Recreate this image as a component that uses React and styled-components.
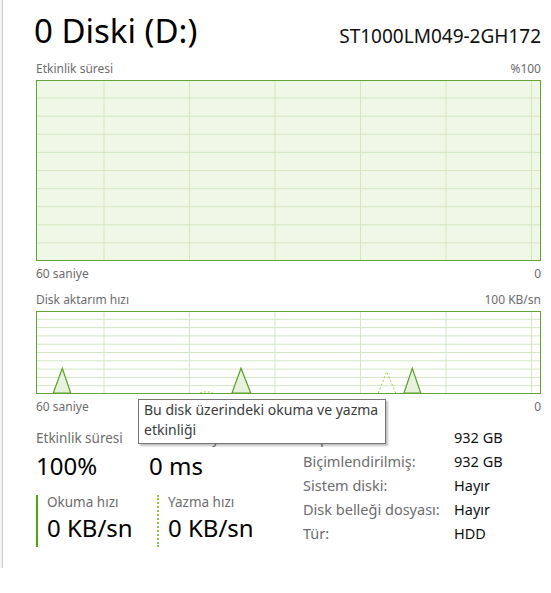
import styled, { createGlobalStyle } from "styled-components";

const GlobalStyle = createGlobalStyle`
  html, body {
    margin: 0;
    padding: 0;
    background: #ffffff;
  }
  body {
    font-family: "Segoe UI", "Noto Sans", sans-serif;
    color: #000;
  }
`;

const Page = styled.div`
  display: flex;
  width: 551px;
  height: 593px;
  overflow: hidden;
`;

const Strip = styled.div`
  width: 2px;
  height: 568px;
  background: #f2f2f2;
  border-right: 1px solid #cdcdcd;
  flex: none;
`;

const Main = styled.div`
  position: relative;
  flex: 1;
  padding: 11px 10px 0 33px;
`;

const Header = styled.div`
  display: flex;
  justify-content: space-between;
  align-items: baseline;
  height: 48px;
`;

const Title = styled.h1`
  margin: 0 0 0 -2px;
  font-size: 33px;
  font-weight: 400;
  line-height: 40px;
`;

const Model = styled.div`
  font-size: 19px;
  line-height: 24px;
  color: #111;
`;

const AxisRow = styled.div`
  display: flex;
  justify-content: space-between;
  font-size: 12px;
  line-height: 16px;
  color: #6d6d6d;
  height: ${(p) => p.$h || 20}px;
  align-items: ${(p) => (p.$top ? "flex-start" : "flex-end")};
  padding: ${(p) => (p.$top ? "5px 0 0" : "0 0 3px")};
  box-sizing: border-box;
`;

const ChartBox = styled.svg`
  display: block;
`;

const Stats = styled.div`
  display: grid;
  grid-template-columns: 267px 1fr;
  margin-top: 14px;
`;

const LeftStats = styled.div`
  display: grid;
  grid-template-columns: 113px 1fr;
  row-gap: 13px;
`;

const Stat = styled.div`
  display: flex;
  flex-direction: column;
  margin-left: ${(p) => (p.$bar === "dotted" ? 8 : 0)}px;
  padding-left: ${(p) => (p.$bar ? 9 : 0)}px;
  border-left: ${(p) =>
    p.$bar === "solid"
      ? "2px solid #4da60c"
      : p.$bar === "dotted"
      ? "2px dotted #8cc63f"
      : "none"};
  height: ${(p) => (p.$bar ? "52px" : "auto")};
`;

const StatLabel = styled.div`
  font-size: 13.5px;
  line-height: ${(p) => (p.$tight ? 14 : 18)}px;
  color: #6d6d6d;
  white-space: nowrap;
`;

const StatValue = styled.div`
  margin-top: 3px;
  font-size: 24px;
  line-height: 32px;
  color: #000;
  white-space: nowrap;
`;

const InfoTable = styled.div`
  display: grid;
  grid-template-columns: 151px 1fr;
  grid-auto-rows: 24px;
  font-size: 14.5px;
  line-height: 24px;
  margin-top: -4px;
`;

const InfoKey = styled.div`
  color: #6d6d6d;
  white-space: nowrap;
`;

const InfoVal = styled.div`
  color: #111;
`;

const Tooltip = styled.div`
  position: absolute;
  left: 135px;
  top: 399px;
  width: 240px;
  padding: 0 1px 3px 5px;
  background: #fff;
  border: 1px solid #767676;
  box-shadow: 2px 2px 2px rgba(0, 0, 0, 0.25);
  font-size: 14px;
  line-height: 20px;
  color: #3c3c3c;
`;

const W = 505;
const vLines = [68, 153.5, 239, 324.5, 410, 495.5];

function Chart({ height, fill, children }) {
  const hLines = Array.from({ length: 9 }, (_, i) => ((i + 1) * height) / 10);
  return (
    <ChartBox width={W} height={height} viewBox={`0 0 ${W} ${height}`}>
      <rect x="0" y="0" width={W} height={height} fill={fill} />
      {hLines.map((y) => (
        <line key={"h" + y} x1="1" x2={W - 1} y1={y} y2={y} stroke="#d3e7c3" strokeWidth="1" />
      ))}
      {vLines.map((x) => (
        <line key={"v" + x} x1={x} x2={x} y1="1" y2={height - 1} stroke="#d3e7c3" strokeWidth="1" />
      ))}
      {children}
      <rect x="0.5" y="0.5" width={W - 1} height={height - 1} fill="none" stroke="#64a335" strokeWidth="1" />
    </ChartBox>
  );
}

function Spike({ x1, x2, peak, top, base, dashed }) {
  const d = `M${x1} ${base} L${peak} ${top} L${x2} ${base}`;
  return dashed ? (
    <path d={d} fill="none" stroke="#9ccc5c" strokeWidth="1" strokeDasharray="2 2" />
  ) : (
    <path d={d + " Z"} fill="#e6f2dc" stroke="#5d9e2b" strokeWidth="1.2" />
  );
}

export default function App() {
  const h2 = 83;
  return (
    <>
      <GlobalStyle />
      <Page>
        <Strip />
        <Main>
          <Header>
            <Title>0 Diski (D:)</Title>
            <Model>ST1000LM049-2GH172</Model>
          </Header>

          <AxisRow $h={21}>
            <span>Etkinlik süresi</span>
            <span>%100</span>
          </AxisRow>
          <Chart height={181} fill="#eff7e6" />
          <AxisRow $h={21} $top>
            <span>60 saniye</span>
            <span>0</span>
          </AxisRow>

          <AxisRow $h={29}>
            <span>Disk aktarım hızı</span>
            <span>100 KB/sn</span>
          </AxisRow>
          <Chart height={h2} fill="#ffffff">
            <Spike x1={164} x2={177} peak={170.7} top={80.5} base={h2 - 1} dashed />
            <Spike x1={342.3} x2={359.7} peak={350.7} top={60.7} base={h2 - 1} dashed />
            <Spike x1={17.3} x2={34.7} peak={26.3} top={57.3} base={h2 - 1} />
            <Spike x1={196} x2={214.7} peak={205} top={57.3} base={h2 - 1} />
            <Spike x1={368} x2={384.7} peak={376.3} top={57.3} base={h2 - 1} />
          </Chart>
          <AxisRow $h={21} $top>
            <span>60 saniye</span>
            <span>0</span>
          </AxisRow>

          <Stats>
            <LeftStats>
              <Stat>
                <StatLabel>Etkinlik süresi</StatLabel>
                <StatValue>100%</StatValue>
              </Stat>
              <Stat>
                <StatLabel>Ortalama yanıt süresi</StatLabel>
                <StatValue>0 ms</StatValue>
              </Stat>
              <Stat $bar="solid">
                <StatLabel $tight>Okuma hızı</StatLabel>
                <StatValue>0 KB/sn</StatValue>
              </Stat>
              <Stat $bar="dotted">
                <StatLabel $tight>Yazma hızı</StatLabel>
                <StatValue>0 KB/sn</StatValue>
              </Stat>
            </LeftStats>
            <InfoTable>
              <InfoKey>Kapasite:</InfoKey>
              <InfoVal>932 GB</InfoVal>
              <InfoKey>Biçimlendirilmiş:</InfoKey>
              <InfoVal>932 GB</InfoVal>
              <InfoKey>Sistem diski:</InfoKey>
              <InfoVal>Hayır</InfoVal>
              <InfoKey>Disk belleği dosyası:</InfoKey>
              <InfoVal>Hayır</InfoVal>
              <InfoKey>Tür:</InfoKey>
              <InfoVal>HDD</InfoVal>
            </InfoTable>
          </Stats>

          <Tooltip>
            Bu disk üzerindeki okuma ve yazma
            <br />
            etkinliği
          </Tooltip>
        </Main>
      </Page>
    </>
  );
}
